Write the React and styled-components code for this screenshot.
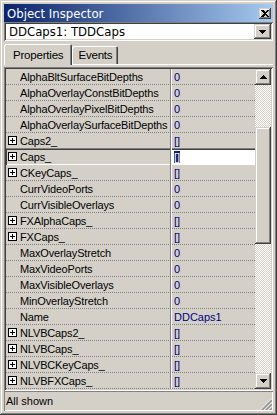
import React from 'react';
import styled, { createGlobalStyle, css } from 'styled-components';

const GlobalStyle = createGlobalStyle`
  html, body {
    margin: 0;
    padding: 0;
    background: #d4d0c8;
  }
  body {
    font-family: 'Liberation Sans', Arial, sans-serif;
    font-size: 11px;
  }
`;

// 3d edges
const raised = css`
  background-color: #d4d0c8;
  box-shadow: inset -1px -1px #404040, inset 1px 1px #d4d0c8,
    inset -2px -2px #808080, inset 2px 2px #ffffff;
`;

const sunken = css`
  box-shadow: inset 1px 1px #808080, inset -1px -1px #ffffff,
    inset 2px 2px #404040, inset -2px -2px #d4d0c8;
`;

const narrow = `'Liberation Sans Narrow', 'DejaVu Sans Condensed', 'Liberation Sans', sans-serif`;

const SEPARATORS = {
  dot: 'linear-gradient(to right, #808080 50%, transparent 50%) left bottom / 2px 1px repeat-x',
  dark: 'linear-gradient(#808080, #808080) left bottom / 100% 1px no-repeat',
  light: 'linear-gradient(#ffffff, #ffffff) left bottom / 100% 1px no-repeat',
};

const Window = styled.div`
  width: 277px;
  height: 415px;
  box-sizing: border-box;
  padding: 4px;
  display: flex;
  flex-direction: column;
  background-color: #d4d0c8;
  box-shadow: inset -1px -1px #404040, inset 1px 1px #d4d0c8,
    inset -2px -2px #808080, inset 2px 2px #ffffff;
`;

const TitleBar = styled.div`
  height: 18px;
  flex: 0 0 18px;
  display: flex;
  align-items: center;
  justify-content: space-between;
  padding: 0 2px 0 3px;
  background: linear-gradient(to right, #0a246a, #a6caf0);
  color: #ffffff;
  font-family: ${narrow};
  font-size: 13px;
`;

const CloseBtn = styled.div`
  ${raised};
  width: 12px;
  height: 11px;
  display: flex;
  align-items: center;
  justify-content: center;
`;

const Combo = styled.div`
  ${sunken};
  height: 19px;
  flex: 0 0 19px;
  box-sizing: border-box;
  padding: 2px;
  display: flex;
  align-items: center;
  background-color: #ffffff;
  font-family: ${narrow};
  font-size: 13px;
  color: #000000;
`;

const ComboText = styled.span`
  flex: 1;
  padding-left: 3px;
`;

const ArrowBtn = styled.div`
  ${raised};
  width: ${({ $w }) => $w}px;
  height: ${({ $h }) => $h}px;
  flex: 0 0 auto;
  display: flex;
  align-items: center;
  justify-content: center;
`;

const Tabs = styled.div`
  height: 24px;
  flex: 0 0 24px;
  display: flex;
  align-items: flex-end;
  box-shadow: inset 0 -1px #ffffff;
`;

const Tab = styled.div`
  height: ${({ $active }) => ($active ? 21 : 18)}px;
  margin-bottom: ${({ $active }) => ($active ? 0 : 1)}px;
  padding: 0 ${({ $active }) => ($active ? 9 : 6)}px 0 ${({ $active }) => ($active ? 9 : 6)}px;
  display: flex;
  align-items: center;
  background-color: #d4d0c8;
  border-radius: 2px 2px 0 0;
  box-shadow: inset 1px 1px #ffffff, inset -1px 0 #404040, inset -2px 0 #808080;
  font-size: 11.5px;
  letter-spacing: -0.2px;
  position: relative;
  z-index: ${({ $active }) => ($active ? 1 : 0)};
`;

const Page = styled.div`
  padding-top: 2px;
  flex: 0 0 auto;
`;

const Grid = styled.div`
  ${sunken};
  height: 324px;
  box-sizing: border-box;
  padding: 2px;
  display: flex;
`;

const Rows = styled.div`
  flex: 1;
  display: flex;
  flex-direction: column;
  overflow: hidden;
`;

const Row = styled.div`
  height: 16px;
  flex: 0 0 16px;
  display: flex;
`;

const NameCell = styled.div`
  width: 165px;
  flex: 0 0 165px;
  box-sizing: border-box;
  display: flex;
  align-items: center;
  padding: 0 0 1px 2px;
  gap: 3px;
  white-space: nowrap;
  overflow: hidden;
  border-right: 1px solid #808080;
  background: ${({ $sep }) => SEPARATORS[$sep]};
  box-shadow: ${({ $selected }) => ($selected ? 'inset 0 1px #404040, inset 1px 0 #404040' : 'none')};
  color: #000000;
  letter-spacing: -0.15px;
`;

const ValueCell = styled.div`
  flex: 1;
  box-sizing: border-box;
  display: flex;
  align-items: center;
  padding: 0 0 1px 2px;
  border-left: 1px solid #ffffff;
  background: ${({ $sep, $selected }) => ($selected ? '#ffffff' : SEPARATORS[$sep])};
  box-shadow: ${({ $selected }) => ($selected ? 'inset 0 1px #404040' : 'none')};
  color: #000080;
  white-space: nowrap;
  overflow: hidden;
`;

const Highlight = styled.span`
  background-color: #0a246a;
  color: #ffffff;
`;

const ExpandBox = styled.span`
  width: 9px;
  height: 9px;
  flex: 0 0 9px;
  box-sizing: border-box;
  display: flex;
  align-items: center;
  justify-content: center;
  border: ${({ $empty }) => ($empty ? 'none' : '1px solid #000000')};
  background-color: ${({ $empty }) => ($empty ? 'transparent' : '#ffffff')};
`;

const ScrollBar = styled.div`
  width: 16px;
  flex: 0 0 16px;
  display: flex;
  flex-direction: column;
`;

const Track = styled.div`
  flex: ${({ $grow }) => ($grow ? '1 1 auto' : '0 0 42px')};
  background: repeating-conic-gradient(#ffffff 0 25%, #d4d0c8 0 50%) 0 0 / 2px 2px;
`;

const Thumb = styled.div`
  ${raised};
  flex: 0 0 117px;
`;

const StatusBar = styled.div`
  height: 20px;
  flex: 0 0 20px;
  display: flex;
  position: relative;
`;

const StatusPanel = styled.div`
  flex: 1;
  display: flex;
  align-items: center;
  padding-left: 2px;
  box-shadow: inset 1px 1px #808080, inset -1px -1px #ffffff;
  color: #000000;
`;

const Grip = styled.svg`
  position: absolute;
  right: 1px;
  bottom: 1px;
`;

const ROWS = [
  { name: 'AlphaBltSurfaceBitDepths', value: '0' },
  { name: 'AlphaOverlayConstBitDepths', value: '0' },
  { name: 'AlphaOverlayPixelBitDepths', value: '0' },
  { name: 'AlphaOverlaySurfaceBitDepths', value: '0' },
  { name: 'Caps2_', value: '[]', set: true },
  { name: 'Caps_', value: '[]', set: true, selected: true },
  { name: 'CKeyCaps_', value: '[]', set: true },
  { name: 'CurrVideoPorts', value: '0' },
  { name: 'CurrVisibleOverlays', value: '0' },
  { name: 'FXAlphaCaps_', value: '[]', set: true },
  { name: 'FXCaps_', value: '[]', set: true },
  { name: 'MaxOverlayStretch', value: '0' },
  { name: 'MaxVideoPorts', value: '0' },
  { name: 'MaxVisibleOverlays', value: '0' },
  { name: 'MinOverlayStretch', value: '0' },
  { name: 'Name', value: 'DDCaps1' },
  { name: 'NLVBCaps2_', value: '[]', set: true },
  { name: 'NLVBCaps_', value: '[]', set: true },
  { name: 'NLVBCKeyCaps_', value: '[]', set: true },
  { name: 'NLVBFXCaps_', value: '[]', set: true },
];

function Arrow({ down }) {
  return (
    <svg width="7" height="4" viewBox="0 0 7 4" shapeRendering="crispEdges">
      <path d={down ? 'M0 0H7L3.5 4Z' : 'M3.5 0L7 4H0Z'} fill="#000" />
    </svg>
  );
}

function Plus() {
  return (
    <svg width="5" height="5" viewBox="0 0 5 5" shapeRendering="crispEdges">
      <path d="M0 2H5V3H0Z M2 0H3V5H2Z" fill="#000" />
    </svg>
  );
}

function separatorFor(index) {
  if (ROWS[index].selected) return 'light';
  if (ROWS[index + 1] && ROWS[index + 1].selected) return 'dark';
  return 'dot';
}

function Inspector() {
  return (
    <Window>
      <TitleBar>
        <span>Object Inspector</span>
        <CloseBtn>
          <svg width="8" height="7" viewBox="0 0 8 7" shapeRendering="crispEdges">
            <path d="M0 0H2L4 2L6 0H8L5 3.5L8 7H6L4 5L2 7H0L3 3.5Z" fill="#000" />
          </svg>
        </CloseBtn>
      </TitleBar>

      <Combo>
        <ComboText>DDCaps1: TDDCaps</ComboText>
        <ArrowBtn $w={17} $h={15}>
          <Arrow down />
        </ArrowBtn>
      </Combo>

      <Tabs>
        <Tab $active>Properties</Tab>
        <Tab>Events</Tab>
      </Tabs>

      <Page>
        <Grid>
          <Rows>
            {ROWS.map((row, i) => {
              const sep = separatorFor(i);
              return (
                <Row key={row.name}>
                  <NameCell $sep={sep} $selected={row.selected}>
                    <ExpandBox $empty={!row.set}>{row.set && <Plus />}</ExpandBox>
                    {row.name}
                  </NameCell>
                  <ValueCell $sep={sep} $selected={row.selected}>
                    {row.selected ? <Highlight>{row.value}</Highlight> : row.value}
                  </ValueCell>
                </Row>
              );
            })}
          </Rows>
          <ScrollBar>
            <ArrowBtn $w={16} $h={16}>
              <Arrow />
            </ArrowBtn>
            <Track />
            <Thumb />
            <Track $grow />
            <ArrowBtn $w={16} $h={16}>
              <Arrow down />
            </ArrowBtn>
          </ScrollBar>
        </Grid>
      </Page>

      <StatusBar>
        <StatusPanel>All shown</StatusPanel>
        <Grip width="12" height="12" viewBox="0 0 12 12">
          {[0, 4, 8].map((k) => (
            <g key={k}>
              <line x1={k + 0.5} y1="12" x2="12" y2={k + 0.5} stroke="#ffffff" />
              <line x1={k + 1.5} y1="12" x2="12" y2={k + 1.5} stroke="#808080" />
              <line x1={k + 2.5} y1="12" x2="12" y2={k + 2.5} stroke="#808080" />
            </g>
          ))}
        </Grip>
      </StatusBar>
    </Window>
  );
}

export default function App() {
  return (
    <>
      <GlobalStyle />
      <Inspector />
    </>
  );
}
